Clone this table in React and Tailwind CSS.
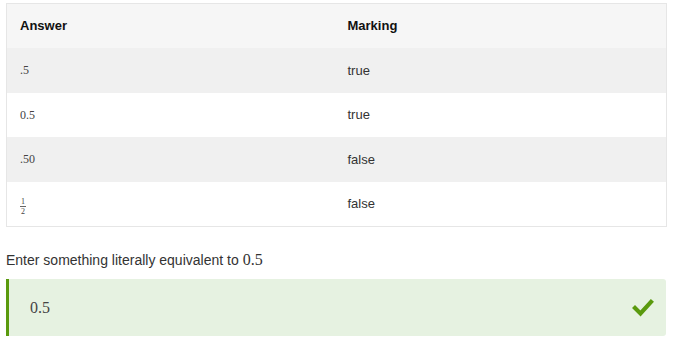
import React from "react";

const rows = [
  { answer: <span>.5</span>, marking: "true" },
  { answer: <span>0.5</span>, marking: "true" },
  { answer: <span>.50</span>, marking: "false" },
  {
    answer: (
      <span className="inline-flex flex-col items-center text-[8px] leading-[9px]">
        <span className="border-b border-[#666] px-[1px]">1</span>
        <span>2</span>
      </span>
    ),
    marking: "false",
  },
];

function Check() {
  return (
    <svg width="22" height="18" viewBox="0 0 22 18">
      <path d="M3 9 L8.5 14.5 L19 3" fill="none" stroke="#5a9a0e" strokeWidth="4.2" strokeLinecap="square" />
    </svg>
  );
}

function App() {
  const sans = { fontFamily: '"Liberation Sans", Arial, sans-serif' };
  const serif = { fontFamily: '"Liberation Serif", "DejaVu Serif", serif' };
  return (
    <div className="bg-white w-[673px] h-[342px] overflow-hidden pt-[3px] px-[6px]" style={sans}>
      <div className="border border-[#e6e6e6] w-[661px]">
        <div className="flex h-[44px] items-center bg-[#f6f6f6] text-[13px] font-bold text-[#111]">
          <div className="w-1/2 pl-[13px]">Answer</div>
          <div className="w-1/2 pl-[11px]">Marking</div>
        </div>
        {rows.map((row, i) => (
          <div
            key={i}
            className={
              "flex h-[44.5px] items-center text-[13px] text-[#333] " +
              (i % 2 === 0 ? "bg-[#f0f0f0]" : "bg-white")
            }
          >
            <div className="w-1/2 pl-[13px] text-[12px] text-[#444]" style={serif}>
              {row.answer}
            </div>
            <div className="w-1/2 pl-[11px]">{row.marking}</div>
          </div>
        ))}
      </div>
      <div className="mt-[23px] text-[14px] text-[#333] h-[20px] flex items-center">
        Enter something literally equivalent to
        <span className="ml-[4px] text-[16px]" style={serif}>
          0.5
        </span>
      </div>
      <div className="mt-[9px] h-[57px] w-[660px] flex items-center justify-between bg-[#e6f2e1] border-l-[3px] border-[#5a9a0e] rounded-r-[3px] pl-[21px] pr-[12px]">
        <span className="text-[16px] text-[#444]" style={serif}>
          0.5
        </span>
        <Check />
      </div>
    </div>
  );
}

export default App;
